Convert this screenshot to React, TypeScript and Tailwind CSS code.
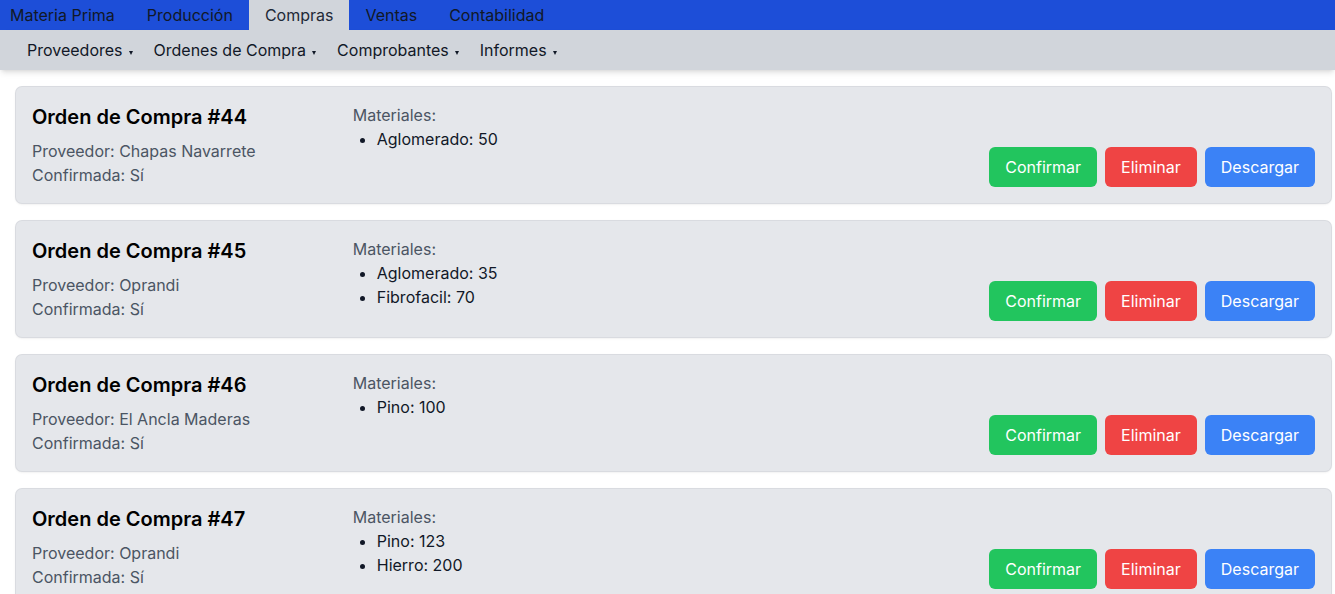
import React from "react";

type Orden = { id: number; proveedor: string; materiales: [string, number][] };

const ordenes: Orden[] = [
  { id: 44, proveedor: "Chapas Navarrete", materiales: [["Aglomerado", 50]] },
  { id: 45, proveedor: "Oprandi", materiales: [["Aglomerado", 35], ["Fibrofacil", 70]] },
  { id: 46, proveedor: "El Ancla Maderas", materiales: [["Pino", 100]] },
  { id: 47, proveedor: "Oprandi", materiales: [["Pino", 123], ["Hierro", 200]] },
];

const tabs = ["Materia Prima", "Producción", "Compras", "Ventas", "Contabilidad"];
const sub = ["Proveedores", "Ordenes de Compra", "Comprobantes", "Informes"];

export default function App() {
  return (
    <div className="min-h-screen bg-white" style={{ fontFamily: "Inter, 'Noto Sans', sans-serif" }}>
      <nav className="flex h-[30px] bg-[#1d4ed8] text-base text-[#111827]">
        {tabs.map((t, i) => (
          <div
            key={t}
            className={`flex items-center ${i === 0 ? "pl-[10px] pr-4" : "px-4"} ${
              t === "Compras" ? "bg-[#d1d5db] text-[#1f2937]" : ""
            }`}
          >
            {t}
          </div>
        ))}
      </nav>
      <div className="flex h-10 items-center bg-[#d1d5db] px-[17px] text-base text-[#111827] shadow-[0_4px_6px_-1px_rgba(0,0,0,0.1),0_2px_4px_-2px_rgba(0,0,0,0.1)]">
        {sub.map((s) => (
          <div key={s} className="flex items-center pl-[10px] pr-[11px]">
            <span>{s}</span>
            <span className="ml-[6px] mt-[5px] h-0 w-0 border-x-[2.5px] border-t-[4px] border-x-transparent border-t-[#111827]" />
          </div>
        ))}
      </div>
      <div className="flex flex-col gap-[18px] pl-4 pr-1 pt-[17px]">
        {ordenes.map((o) => (
          <div
            key={o.id}
            className="flex rounded-md bg-[#e5e7eb] p-4 shadow-[0_1px_3px_0_rgba(0,0,0,0.1),0_1px_2px_-1px_rgba(0,0,0,0.1)] ring-1 ring-[#d9dbe0]"
          >
            <div className="w-1/4 shrink-0">
              <h2 className="text-xl font-semibold text-black">Orden de Compra #{o.id}</h2>
              <p className="mt-2 text-[#4b5563]">Proveedor: {o.proveedor}</p>
              <p className="text-[#4b5563]">Confirmada: Sí</p>
            </div>
            <div className="flex-1">
              <p className="text-[#4b5563]">Materiales:</p>
              <ul className="list-disc pl-6 text-[#111827]">
                {o.materiales.map(([m, q]) => (
                  <li key={m}>
                    {m}: {q}
                  </li>
                ))}
              </ul>
            </div>
            <div className="flex items-end gap-2">
              <button className="rounded-md bg-[#22c55e] px-4 py-2 text-white">Confirmar</button>
              <button className="rounded-md bg-[#ef4444] px-4 py-2 text-white">Eliminar</button>
              <button className="rounded-md bg-[#3b82f6] px-4 py-2 text-white">Descargar</button>
            </div>
          </div>
        ))}
      </div>
    </div>
  );
}
